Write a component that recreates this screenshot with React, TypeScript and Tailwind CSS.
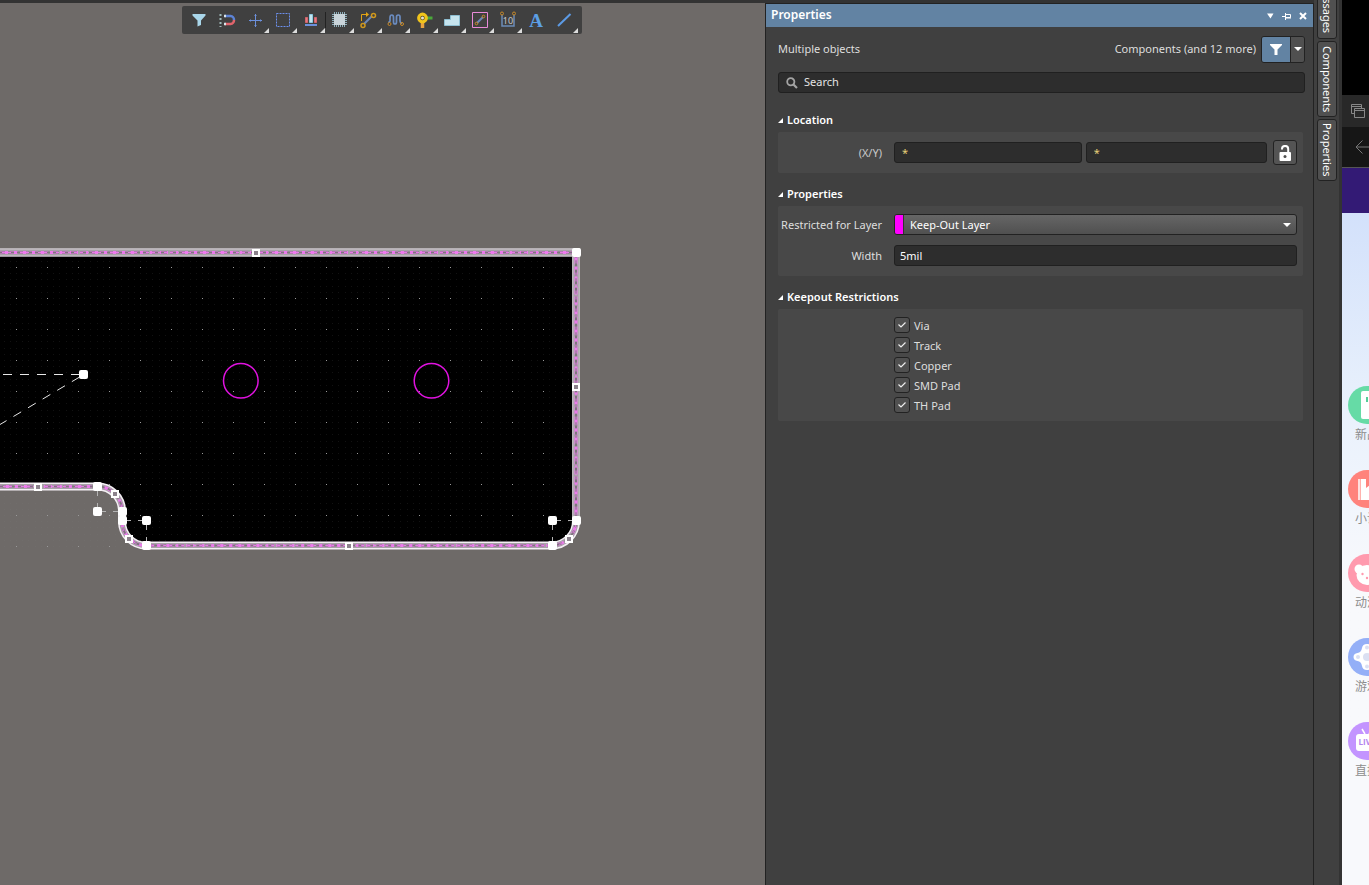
import { useState } from "react";
import type { ReactNode } from "react";

const OUTLINE =
  "M-10 252.5 H576 V521 A24.5 24.5 0 0 1 551.5 545.5 H146 A24 24 0 0 1 122 521.5 V511 A24.5 24.5 0 0 0 97.5 486.5 H-10";

const END_HANDLES = [
  [83, 375], [576, 253], [97, 487], [97, 512], [122, 512], [122, 521],
  [146, 521], [146, 546], [552, 521], [552, 546], [576, 521],
];

const MID_HANDLES = [
  [256, 253], [576, 387], [38, 487], [349, 546], [115, 494], [129, 539], [569, 539],
];

const RESTRICTIONS = ["Via", "Track", "Copper", "SMD Pad", "TH Pad"];

interface Tool {
  name: string;
  icon: ReactNode;
  menu?: boolean;
  divider?: boolean;
}

const TOOLS: Tool[] = [
  {
    name: "Filter",
    icon: <path d="M3.5 4h13v1.5L12 10.5V15l-3.5 1.5v-6L3.5 5.5z" fill="#a9d6ea" />,
  },
  {
    name: "Snapping",
    icon: (
      <g fill="none" strokeWidth="2.5">
        <path d="M8 6h5.5a3.8 3.8 0 0 1 3.5 4" stroke="#5d83d6" />
        <path d="M17 10a3.8 3.8 0 0 1-3.5 4H8" stroke="#e0646c" />
        <path d="M8 4.75v2.5M8 12.75v2.5" stroke="#d9e6ec" strokeWidth="2" />
        <path d="M3.5 4v13" stroke="#9fb9b9" strokeWidth="2" strokeDasharray="2 2" />
      </g>
    ),
  },
  {
    name: "Crosshair",
    menu: true,
    icon: (
      <g stroke="#6c90dc" fill="none">
        <path d="M10.5 4v13M4 10.5h13" />
        <path d="M9.5 5.5h2M9.5 15.5h2M5.5 9.5v2M15.5 9.5v2" />
      </g>
    ),
  },
  {
    name: "Select area",
    menu: true,
    icon: <path d="M3.5 3.5h13v13h-13z" fill="none" stroke="#6c90ee" strokeDasharray="2 1" />,
  },
  {
    name: "Align",
    menu: true,
    divider: true,
    icon: (
      <g>
        <path d="M4.5 7.5h2v5h-2zM13.5 7.5h2v5h-2z" fill="#e47a80" stroke="#d4646c" />
        <path d="M8.5 4.5h3v8h-3z" fill="#c6e6ee" stroke="#8dc8e0" />
        <path d="M4 15h12" stroke="#6c90dc" strokeWidth="2" />
      </g>
    ),
  },
  {
    name: "Place component",
    menu: true,
    icon: (
      <g>
        <path d="M4.5 2v15M6.5 2v15M8.5 2v15M10.5 2v15M12.5 2v15M14.5 2v15M2 4.5h15M2 6.5h15M2 8.5h15M2 10.5h15M2 12.5h15M2 14.5h15" stroke="#8fb0bc" />
        <path d="M4 4h11v11H4z" fill="#c9d4da" />
      </g>
    ),
  },
  {
    name: "Route",
    menu: true,
    icon: (
      <g fill="none">
        <path d="M6 14l8-8" stroke="#6b86b8" strokeWidth="2" />
        <path d="M3.5 11V4.500h5.5" stroke="#e4a414" />
        <path d="M8 2v5l3-2.5z" fill="#e4a414" />
        <circle cx="5" cy="15.5" r="2" stroke="#d0981c" strokeWidth="1.5" />
        <circle cx="15.5" cy="5.5" r="2" stroke="#d0981c" strokeWidth="1.5" />
      </g>
    ),
  },
  {
    name: "Tune length",
    menu: true,
    icon: (
      <g fill="none">
        <path d="M3 13q0-1.500 1-2V8q0-3 1.800-3t1.700 3v4q0 2 1.500 2t1.500-2V7q0-2 1.800-2T14 7v4q0 2 2 2.500" stroke="#6b8cc0" strokeWidth="1.700" />
        <circle cx="3.5" cy="14" r="1.500" stroke="#c98a28" />
        <circle cx="16" cy="14" r="1.500" stroke="#c98a28" />
      </g>
    ),
  },
  {
    name: "Place via",
    menu: true,
    icon: (
      <g>
        <path d="M12 8h6.5" stroke="#4aa83a" strokeWidth="3" />
        <path d="M8.5 12v6" stroke="#e9a23e" strokeWidth="3.500" />
        <circle cx="8.5" cy="8" r="3.8" fill="#5a4c20" stroke="#f0c41c" strokeWidth="3.200" />
        <circle cx="8.5" cy="8" r="1.5" fill="#e8e4d4" />
      </g>
    ),
  },
  {
    name: "Place polygon",
    menu: true,
    icon: <path d="M2.5 9.5h6v-4h9v10h-15z" fill="#c6e4ee" stroke="#8ebfd2" />,
  },
  {
    name: "Place keepout",
    menu: true,
    icon: (
      <g fill="none">
        <path d="M2.5 2.5h15v15h-15z" stroke="#e88ad8" />
        <path d="M7 13l6-6" stroke="#6b86b8" strokeWidth="2" />
        <circle cx="6.5" cy="13.5" r="1.3" stroke="#c98a28" />
        <circle cx="13.5" cy="6.5" r="1.3" stroke="#c98a28" />
      </g>
    ),
  },
  {
    name: "Dimension",
    menu: true,
    icon: (
      <g fill="none">
        <path d="M4 5v11h12V5" stroke="#6b8cb8" strokeWidth="1.5" />
        <circle cx="4" cy="3.5" r="1.5" stroke="#c98a28" />
        <circle cx="16" cy="3.5" r="1.5" stroke="#c98a28" />
        <text x="10" y="14" textAnchor="middle" fontSize="9" fill="#c8c8c8" fontFamily="Noto Sans, sans-serif">10</text>
      </g>
    ),
  },
  {
    name: "Place text",
    icon: (
      <text x="10" y="17" textAnchor="middle" fontSize="19" fontWeight="bold" fill="#5c9fe4" fontFamily="Liberation Serif, serif">A</text>
    ),
  },
  {
    name: "Place line",
    menu: true,
    icon: <path d="M4 16L16.5 4" stroke="#5c9be6" strokeWidth="2" />,
  },
];

function Toolbar() {
  return (
    <div className="relative flex h-7 items-center rounded-xs bg-[#404040] pr-1 pl-[3px]">
      {TOOLS.map((t) => (
        <div key={t.name} className="flex items-center">
          <button type="button" aria-label={t.name} className="relative flex h-7 w-7 items-center justify-center">
            <svg viewBox="0 0 20 20" className="h-5 w-5 shrink-0">{t.icon}</svg>
            {t.menu && (
              <svg viewBox="0 0 5 5" className="absolute right-0 bottom-[1px] h-[5px] w-[5px]">
                <path d="M5 0v5H0z" fill="#dcdcdc" />
              </svg>
            )}
          </button>
          {t.divider && <span className="h-4 w-px bg-[#222]" />}
        </div>
      ))}
    </div>
  );
}

function Board() {
  return (
    <svg className="absolute inset-0 h-full w-full" aria-label="Board layout">
      <defs>
        <pattern id="fine" x="16" y="19" width="31" height="31" patternUnits="userSpaceOnUse">
          {[0, 6, 12, 19, 25].map((x) =>
            [0, 6, 12, 19, 25].map((y) => (
              <rect key={`${x}-${y}`} x={x} y={y} width="1" height="1" fill="#808080" fillOpacity="0.14" />
            ))
          )}
        </pattern>
        <pattern id="coarse" x="16" y="19" width="31" height="31" patternUnits="userSpaceOnUse">
          <rect width="1" height="1" fill="#9a9a9a" />
        </pattern>
      </defs>
      <g transform="translate(0 -3)">
        <path d={OUTLINE} fill="#000" />
        <rect x="0" y="256" width="572" height="291" fill="url(#fine)" />
        <rect x="0" y="256" width="572" height="291" fill="url(#coarse)" />

        {/* board edge */}
        <g fill="none">
          <path d={OUTLINE} stroke="#f4eef4" strokeWidth="8" />
          <path d="M0 252.5H576V521" stroke="#bcb6bc" strokeWidth="8" />
          <path d={OUTLINE} stroke="#a8a2a8" strokeWidth="5" />
          <path d={OUTLINE} stroke="#ec7aec" strokeWidth="3" strokeDasharray="8 2" />
          <path d={OUTLINE} stroke="#7d787d" strokeWidth="2" strokeDasharray="6 3" />
          <path d={OUTLINE} stroke="#e67be6" strokeWidth="1" strokeDasharray="3 3" />
        </g>

        <g fill="none" stroke="#e012e0" strokeWidth="1.5">
          <circle cx="240.8" cy="380.8" r="17.300" />
          <circle cx="431.5" cy="380.8" r="17.300" />
        </g>

        <g stroke="#e8e8e8" strokeDasharray="9 8" fill="none">
          <path d="M3 374.5H83" />
          <path d="M83 375L0 424.500" strokeDashoffset="-4" />
        </g>
        <g stroke="#b4b4b4" strokeDasharray="9 7" fill="none">
          <path d="M97.5 487v25M97 511.5h25M122 520.5h24M146.5 521v25M552.5 521v25M552 520.5h24" />
        </g>

        {END_HANDLES.map(([x, y]) => (
          <rect key={`${x}-${y}`} x={x - 4} y={y - 5} width="9" height="9" rx="2" fill="#fff" />
        ))}
        {MID_HANDLES.map(([x, y]) => (
          <rect key={`${x}-${y}`} x={x - 3} y={y - 3} width="6" height="6" fill="#8c828c" stroke="#fff" strokeWidth="2" />
        ))}
      </g>
    </svg>
  );
}

function Section({ title, className, children }: { title: string; className: string; children: ReactNode }) {
  return (
    <section className="mr-0.5">
      <h2 className="flex h-5 items-center gap-1 font-semibold text-white">
        <svg viewBox="0 0 5 5" className="h-[5px] w-[5px]">
          <path d="M5 0v5H0z" fill="#fff" />
        </svg>
        {title}
      </h2>
      <div className={`mt-0.5 rounded-xs bg-[#484848] pr-1.5 ${className}`}>{children}</div>
    </section>
  );
}

function PropertiesPanel() {
  const [x, setX] = useState("*");
  const [y, setY] = useState("*");
  const [width, setWidth] = useState("5mil");
  const [allowed, setAllowed] = useState(RESTRICTIONS);

  const toggle = (name: string) =>
    setAllowed((prev) => (prev.includes(name) ? prev.filter((n) => n !== name) : [...prev, name]));

  const field = "h-[21px] min-w-0 rounded-[3px] border border-[#202020] bg-[#2d2d2d] outline-none";

  return (
    <aside className="w-[549px] shrink-0 border-x border-[#222] bg-[#404040] text-[#dedede]">
      <header className="flex h-6 items-center border-t border-[#222] bg-[#6283a3] pr-1.5 pl-[5px] text-white">
        <h1 className="flex-1 pb-0.5 text-[12px] font-semibold">Properties</h1>
        <div className="flex gap-2">
          <button type="button" aria-label="Panel menu" className="h-2 w-2">
            <svg viewBox="0 0 8 8"><path d="M1 1.5h6.500L4.500 6.500z" fill="#fff" /></svg>
          </button>
          <button type="button" aria-label="Pin panel" className="h-2 w-[9px]">
            <svg viewBox="0 0 9 8" fill="none" stroke="#fff"><path d="M0 4.5h3M3.5 1v7M4 2.5h4.500v3H4M4 6h5" /></svg>
          </button>
          <button type="button" aria-label="Close panel" className="h-2 w-2">
            <svg viewBox="0 0 8 8"><path d="M1 1l6 6M7 1L1 7" stroke="#fff" strokeWidth="2" /></svg>
          </button>
        </div>
      </header>

      <div className="pt-[9px] pr-2 pl-3">
        <div className="flex h-[26px] items-center">
          <span className="flex-1">Multiple objects</span>
          <span>Components (and 12 more)</span>
          <div className="ml-[5px] flex h-[27px] w-11 overflow-hidden rounded-[3px] border border-[#222]">
            <button type="button" aria-label="Filter" className="flex w-7 items-center justify-center bg-[#6283a3]">
              <svg viewBox="0 0 12 11" className="h-[11px] w-3"><path d="M0 0h12v1L7.5 5.5V11h-3V5.5L0 1z" fill="#fff" /></svg>
            </button>
            <button type="button" aria-label="Filter options" className="flex flex-1 items-center justify-center border-l border-[#222] bg-[#505050]">
              <svg viewBox="0 0 8 4" className="h-1 w-2"><path d="M0 0h8L4 4z" fill="#fff" /></svg>
            </button>
          </div>
        </div>

        <label className={`mt-2.5 mb-[17px] flex items-center gap-1.5 px-[5px] ${field}`}>
          <svg viewBox="0 0 12 12" className="ml-0.5 h-3 w-3" fill="none" stroke="#a4a4a4">
            <circle cx="4.800" cy="4.800" r="3.600" strokeWidth="1.800" />
            <path d="M7.5 7.5l3.500 3.500" strokeWidth="2.200" />
          </svg>
          <input type="search" aria-label="Search" placeholder="Search" className="h-full flex-1 bg-transparent pb-0.5 outline-none placeholder:text-[#e4e4e4]" />
        </label>

        <div className="space-y-[11px]">
          <Section title="Location" className="flex items-center py-2">
            <label htmlFor="loc-x" className="w-[104px] text-right text-[#c8c8c8]">(X/Y)</label>
            <input id="loc-x" value={x} onChange={(e) => setX(e.target.value)} className={`ml-3 flex-[188] px-[7px] text-[#e6cf78] ${field}`} />
            <input aria-label="Y" value={y} onChange={(e) => setY(e.target.value)} className={`ml-1 flex-[181] px-[7px] text-[#e6cf78] ${field}`} />
            <button type="button" aria-label="Lock" className="ml-1.5 flex h-[25px] w-6 items-center justify-center rounded-[3px] border border-[#222] bg-[#545454]">
              <svg viewBox="0 0 12 16" className="h-4 w-3">
                <path d="M3 4.5V4a3 3 0 0 1 6.200 0v4" fill="none" stroke="#fff" strokeWidth="2" />
                <rect x="0.5" y="7" width="11.500" height="9" rx="1" fill="#fff" />
                <circle cx="6" cy="11.500" r="1.500" fill="#505050" />
              </svg>
            </button>
          </Section>

          <Section title="Properties" className="space-y-2.5 pt-2 pb-2.5">
            <div className="flex items-center">
              <label htmlFor="layer" className="w-[104px] text-right">Restricted for Layer</label>
              <div className="relative ml-3 flex h-[21px] flex-1 items-center overflow-hidden rounded-[3px] border border-[#222] bg-linear-to-b from-[#666] to-[#505050]">
                <span className="h-full w-[9px] border-r border-[#333] bg-[#ff00ff]" />
                <select id="layer" className="h-full flex-1 appearance-none bg-transparent pl-1.5 text-white outline-none">
                  <option>Keep-Out Layer</option>
                </select>
                <svg viewBox="0 0 8 4" className="pointer-events-none absolute right-[5px] h-1 w-2"><path d="M0 0h8L4 4z" fill="#fff" /></svg>
              </div>
            </div>
            <div className="flex items-center">
              <label htmlFor="width" className="w-[104px] text-right">Width</label>
              <input id="width" value={width} onChange={(e) => setWidth(e.target.value)} className={`ml-3 flex-1 px-[5px] text-white ${field}`} />
            </div>
          </Section>

          <Section title="Keepout Restrictions" className="py-1.5 pl-[116px]">
            {RESTRICTIONS.map((name) => (
              <label key={name} className="flex h-5 items-center gap-1">
                <span className="grid h-4 w-4 place-items-center">
                  <input
                    type="checkbox"
                    checked={allowed.includes(name)}
                    onChange={() => toggle(name)}
                    className="peer col-start-1 row-start-1 h-4 w-4 appearance-none rounded-[3px] border border-[#222] bg-[#505050]"
                  />
                  <svg viewBox="0 0 8 6" className="pointer-events-none invisible col-start-1 row-start-1 h-1.5 w-2 peer-checked:visible">
                    <path d="M0.5 2.5L3 5l4.500-4.500" fill="none" stroke="#eee" strokeWidth="1.200" />
                  </svg>
                </span>
                <span className="pt-0.5">{name}</span>
              </label>
            ))}
          </Section>
        </div>
      </div>
    </aside>
  );
}

function SideTabs() {
  const tab = "flex w-5 shrink-0 items-center justify-center rounded-[3px] border border-[#222] bg-[#505050] text-white [writing-mode:vertical-rl]";
  return (
    <nav className="flex w-7 shrink-0 flex-col gap-0.5 border-r-[3px] border-[#333] bg-[#404040] pl-[3px]">
      <div className="flex h-[39px] flex-col justify-end overflow-hidden">
        <button type="button" className={`h-[62px] ${tab}`}>Messages</button>
      </div>
      <button type="button" className={`h-[76px] ${tab}`}>Components</button>
      <button type="button" className={`h-[62px] ${tab}`}>Properties</button>
    </nav>
  );
}

const CHANNELS = [
  {
    label: "新品",
    color: "bg-[#66dba6]",
    icon: <g><rect x="13" y="5" width="20" height="28" rx="2" fill="#fff" /><path d="M19 11v5M24 11v5" stroke="#55cc98" strokeWidth="2" /></g>,
  },
  {
    label: "小说",
    color: "bg-[#ff837c]",
    icon: <g><path d="M13 9h14v21H13z" fill="#fff" /><path d="M10 9h2.5v21H10z" fill="#ffe0de" /><path d="M18 9v9l4-3 4 3V9z" fill="#ff837c" /></g>,
  },
  {
    label: "动漫",
    color: "bg-[#ff9aae]",
    icon: (
      <g fill="#fff">
        <circle cx="11" cy="15" r="4.500" /><circle cx="27" cy="15" r="4.500" /><ellipse cx="19" cy="21" rx="10.500" ry="10" />
        <g fill="#ff9aae"><circle cx="14.500" cy="20" r="1.200" /><circle cx="23.500" cy="20" r="1.200" /><circle cx="19" cy="24" r="1.200" /></g>
      </g>
    ),
  },
  {
    label: "游戏",
    color: "bg-[#94aff7]",
    icon: (
      <g>
        <path d="M19 6c3 0 4.500 1.500 5 4 .5 3 2 4.500 4.500 5 2.500.5 4 1.800 4 4s-1.500 3.500-4 4-4 2-4.500 5c-.5 2.500-2 4-5 4s-4.500-1.500-5-4c-.5-3-2-4.500-4.500-5s-4-1.800-4-4 1.500-3.500 4-4 4-2 4.500-5c.5-2.500 2-4 5-4z" fill="#fff" />
        <g fill="#dbe0f2"><circle cx="19" cy="19" r="4" /><circle cx="19" cy="9.500" r="2" /><circle cx="10" cy="19" r="2" /><circle cx="19" cy="28.500" r="2" /></g>
      </g>
    ),
  },
  {
    label: "直播",
    color: "bg-[#c394ff]",
    icon: (
      <g>
        <path d="M14 7l3 5M24 7l-3 5" stroke="#fff" strokeWidth="1.500" />
        <rect x="8" y="12" width="22" height="17" rx="3" fill="#fff" />
        <text x="19" y="23" textAnchor="middle" fontSize="8" fontWeight="bold" fill="#b384f0" fontFamily="Open Sans, sans-serif">LIVE</text>
      </g>
    ),
  },
];

function NeighbourWindow() {
  return (
    <div className="flex w-[27px] shrink-0 flex-col overflow-hidden bg-[#f8f9fc]">
      <div className="h-[95px] shrink-0 bg-black" />
      <div className="flex h-8 shrink-0 items-center bg-[#282828] pl-[9px]">
        <svg viewBox="0 0 14 14" className="h-3.5 w-3.5 shrink-0" fill="none" stroke="#888">
          <path d="M3 9.5H0.5v-9h10V4M0.5 2.5h10M3.5 4.5h10v9h-10zM3.5 6.5h10" />
        </svg>
      </div>
      <div className="flex h-[41px] shrink-0 items-center border-b border-[#555] bg-[#161616] pl-[13px]">
        <svg viewBox="0 0 16 14" className="h-3.5 w-4 shrink-0" fill="none" stroke="#777">
          <path d="M7.5 0.5L1 7l6.500 6.500M1 7h15" />
        </svg>
      </div>
      <div className="h-[45px] shrink-0 bg-[#331a75]" />
      <div className="flex shrink-0 flex-col gap-[27px] bg-linear-to-b from-[#d3e1fb] from-0% via-[#e9f1fc] via-35% to-[#f8f9fc] to-65% pt-[173px] pl-1.5">
        {CHANNELS.map((c) => (
          <a key={c.label} href="#" className="flex w-[38px] flex-col items-center">
            <span className={`h-[38px] w-[38px] rounded-full ${c.color}`}>
              <svg viewBox="0 0 38 38">{c.icon}</svg>
            </span>
            <span className="h-[19px] font-['Noto_Sans_CJK_SC',sans-serif] text-[12px] leading-5 text-[#8c8c8c]">{c.label}</span>
          </a>
        ))}
      </div>
    </div>
  );
}

export default function App() {
  return (
    <div className="flex h-screen overflow-hidden bg-[#404040] font-['Noto_Sans',sans-serif] text-[11px] leading-4">
      <div className="flex min-w-0 flex-1 flex-col">
        <div className="h-[3px] shrink-0 bg-[#333]" />
        <div className="flex min-h-0 flex-1">
          <main className="relative flex min-w-0 flex-1 items-start justify-center overflow-hidden bg-[#6e6a68] pt-[3px] pr-0.5">
            <Board />
            <Toolbar />
          </main>
          <PropertiesPanel />
        </div>
      </div>
      <SideTabs />
      <NeighbourWindow />
    </div>
  );
}
